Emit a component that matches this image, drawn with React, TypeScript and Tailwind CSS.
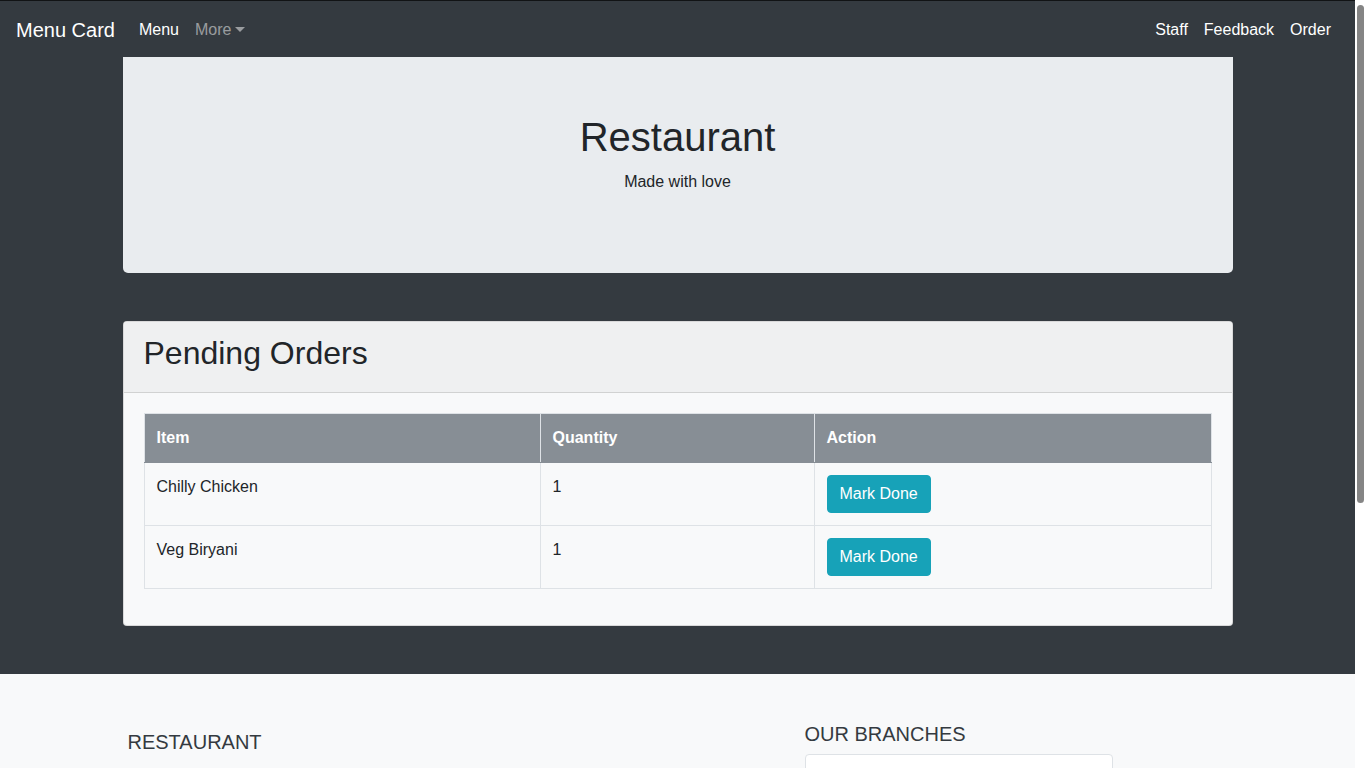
import React from 'react';

const orders = [
  { item: 'Chilly Chicken', qty: 1 },
  { item: 'Veg Biryani', qty: 1 },
];

const NavLink: React.FC<{ children: React.ReactNode; muted?: boolean }> = ({ children, muted }) => (
  <a href="#" className={`px-2 leading-6 ${muted ? 'text-white/50' : 'text-white'}`}>
    {children}
  </a>
);

export default function App() {
  return (
    <div className="h-screen flex bg-[#f8f9fa] font-['Liberation_Sans',Arial,sans-serif] text-base leading-6 text-[#212529]">
      <div className="flex-1 overflow-hidden">
        <div className="bg-[#343a40] border-t border-[#111315]">
          {/* Navbar */}
          <nav className="h-14 px-4 pt-[2px] flex items-center">
            <a href="#" className="text-white text-xl leading-[30px] mr-4">Menu Card</a>
            <div className="flex items-center">
              <NavLink>Menu</NavLink>
              <NavLink muted>
                More
                <span className="inline-block ml-[4px] align-[3px] border-t-[5px] border-t-white/50 border-x-[5px] border-x-transparent" />
              </NavLink>
            </div>
            <div className="ml-auto flex items-center">
              <NavLink>Staff</NavLink>
              <NavLink>Feedback</NavLink>
              <NavLink>Order</NavLink>
            </div>
          </nav>

          <main className="w-[1110px] mx-auto pb-12">
            {/* Jumbotron */}
            <section className="bg-[#e9ecef] rounded-b-[5px] pt-[56px] pb-[63px] px-8 mb-12 text-center">
              <h1 className="text-[40px] leading-[48px] mb-[9px]">Restaurant</h1>
              <p className="mb-4">Made with love</p>
            </section>

            {/* Pending orders card */}
            <section className="bg-[#f8f9fa] border border-black/[.125] rounded-[4px] overflow-hidden">
              <div className="bg-[#eff0f1] border-b border-black/[.125] px-5 py-3">
                <h2 className="text-[32px] leading-[38px] mb-2">Pending Orders</h2>
              </div>
              <div className="p-5">
                <table className="w-full border-collapse mb-4">
                  <thead>
                    <tr className="bg-[#878e95] text-white">
                      <th className="w-[396px] text-left font-bold p-3 border border-[#dee2e6] border-b-[#878e95]">Item</th>
                      <th className="w-[274px] text-left font-bold p-3 border border-[#dee2e6] border-b-[#878e95]">Quantity</th>
                      <th className="text-left font-bold p-3 border border-[#dee2e6] border-b-[#878e95]">Action</th>
                    </tr>
                  </thead>
                  <tbody>
                    {orders.map((o) => (
                      <tr key={o.item}>
                        <td className="align-top p-3 border border-[#dee2e6]">{o.item}</td>
                        <td className="align-top p-3 border border-[#dee2e6]">{o.qty}</td>
                        <td className="align-top p-3 border border-[#dee2e6]">
                          <button className="bg-[#17a2b8] border border-[#17a2b8] text-white rounded-[4px] px-3 py-1.5 leading-6">
                            Mark Done
                          </button>
                        </td>
                      </tr>
                    ))}
                  </tbody>
                </table>
              </div>
            </section>
          </main>
        </div>

        {/* Footer */}
        <footer className="bg-[#f8f9fa] pt-12 pb-12">
          <div className="w-[1110px] mx-auto flex">
            <div className="w-[682px] pl-[5px] pt-2">
              <h5 className="text-xl leading-6 text-[#343a40] mb-2">RESTAURANT</h5>
            </div>
            <div className="w-[308px]">
              <h5 className="text-xl leading-6 text-[#343a40] mb-2">OUR BRANCHES</h5>
              <div className="h-[380px] bg-white border border-[#dee2e6] rounded-[4px]" />
            </div>
          </div>
        </footer>
      </div>

      {/* page scrollbar */}
      <div className="w-[11px] bg-white px-[2px] pt-[5px]">
        <div className="h-[498px] rounded-full bg-[#858585]" />
      </div>
    </div>
  );
}
